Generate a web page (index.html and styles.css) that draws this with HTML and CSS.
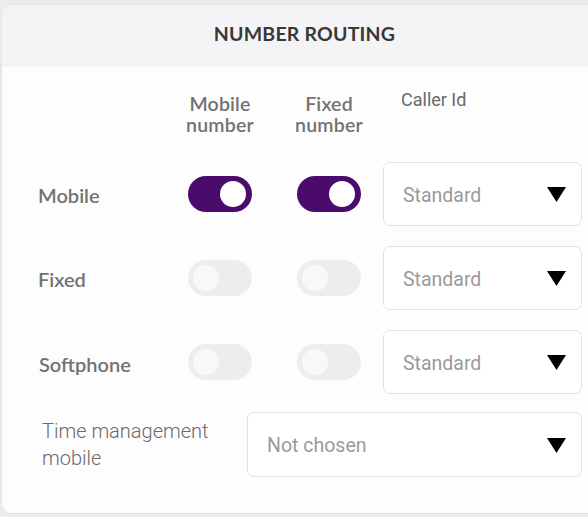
FILE: index.html
```html
<!DOCTYPE html>
<html>
<head>
<meta charset="utf-8">
<link rel="stylesheet" href="styles.css">
</head>
<body>
<div class="viewport">
  <section class="card">
    <header class="card-head">NUMBER ROUTING</header>
    <div class="card-body">
      <div class="grid">
        <div class="col-head"></div>
        <div class="col-head toggle-head"><span class="two-line"><span>Mobile</span><span>number</span></span></div>
        <div class="col-head toggle-head"><span class="two-line"><span>Fixed</span><span>number</span></span></div>
        <div class="col-head caller">Caller Id</div>

        <div class="row-label">Mobile</div>
        <div class="cell"><span class="toggle on"><span class="knob"></span></span></div>
        <div class="cell"><span class="toggle on"><span class="knob"></span></span></div>
        <div class="select"><span>Standard</span><svg class="caret" width="19" height="15" viewBox="0 0 19 15"><path d="M0 0H19L9.5 15Z"/></svg></div>

        <div class="row-label">Fixed</div>
        <div class="cell"><span class="toggle"><span class="knob"></span></span></div>
        <div class="cell"><span class="toggle"><span class="knob"></span></span></div>
        <div class="select"><span>Standard</span><svg class="caret" width="19" height="15" viewBox="0 0 19 15"><path d="M0 0H19L9.5 15Z"/></svg></div>

        <div class="row-label soft">Softphone</div>
        <div class="cell"><span class="toggle"><span class="knob"></span></span></div>
        <div class="cell"><span class="toggle"><span class="knob"></span></span></div>
        <div class="select"><span>Standard</span><svg class="caret" width="19" height="15" viewBox="0 0 19 15"><path d="M0 0H19L9.5 15Z"/></svg></div>
      </div>
      <div class="time-row">
        <div class="time-label"><span>Time management</span><span>mobile</span></div>
        <div class="select wide"><span>Not chosen</span><svg class="caret" width="19" height="15" viewBox="0 0 19 15"><path d="M0 0H19L9.5 15Z"/></svg></div>
      </div>
    </div>
  </section>
</div>
</body>
</html>
```

FILE: styles.css
```css
html, body {
  margin: 0;
  padding: 0;
  overflow: hidden;
  background: #ececec;
}

.viewport {
  width: 588px;
  height: 517px;
  overflow: hidden;
  padding: 4px 0 0 1px;
  box-sizing: border-box;
}

.card {
  width: 605px;
  background: #fdfdfd;
  border: 1px solid #e2e2e2;
  border-radius: 10px;
  overflow: hidden;
  font-family: Lato, "Open Sans", sans-serif;
}

.card-head {
  height: 56px;
  padding-bottom: 6px;
  background: #f4f4f6;
  display: flex;
  align-items: center;
  justify-content: center;
  font-family: Lato, sans-serif;
  font-weight: 700;
  font-size: 19.5px;
  color: #383838;
  letter-spacing: 0.2px;
}

.card-body {
  padding: 26px 0 36px 36px;
}

.grid {
  display: grid;
  grid-template-columns: 150px 109px 86px 199px;
  grid-auto-rows: 64px;
  grid-template-rows: 49px;
  row-gap: 20px;
  align-items: center;
}

.col-head {
  align-self: start;
  font-size: 19.5px;
  color: #727272;
  font-weight: 600;
}

.toggle-head {
  width: 64px;
  display: flex;
  justify-content: center;
  white-space: nowrap;
}

.two-line {
  display: flex;
  flex-direction: column;
  align-items: center;
  letter-spacing: 0.2px;
}

.two-line span {
  line-height: 21px;
  height: 21px;
}

.caller {
  font-family: Roboto, sans-serif;
  font-weight: 400;
  font-size: 18px;
  line-height: 21px;
  color: #6a6a6a;
  margin-top: -4px;
  padding-left: 18px;
}

.row-label {
  font-size: 20px;
  font-weight: 600;
  color: #727272;
  padding-top: 2px;
}

.row-label.soft {
  padding-left: 1px;
  padding-top: 4px;
}

.cell {
  display: flex;
  align-items: center;
}

.toggle {
  position: relative;
  display: block;
  width: 64px;
  height: 36px;
  border-radius: 18px;
  background: #ededed;
}

.toggle .knob {
  position: absolute;
  top: 5px;
  left: 5px;
  width: 26px;
  height: 26px;
  border-radius: 50%;
  background: #f8f8f8;
}

.toggle.on {
  background: #4b0b6d;
}

.toggle.on .knob {
  left: auto;
  right: 6px;
  background: #ffffff;
}

.select {
  box-sizing: border-box;
  height: 64px;
  border: 1.5px solid #e1e1e1;
  border-radius: 7px;
  background: #fff;
  display: flex;
  align-items: center;
  justify-content: space-between;
  padding: 0 15px 0 19px;
  font-family: Roboto, sans-serif;
  font-size: 19.5px;
  color: #9a9a9a;
}

.select span {
  padding-top: 3px;
}

.caret {
  display: block;
  fill: #000;
  margin-top: 1px;
}

.time-row {
  display: flex;
  align-items: center;
  margin-top: 18px;
}

.time-label {
  width: 209px;
  padding-left: 4px;
  box-sizing: border-box;
  display: flex;
  flex-direction: column;
  font-family: Roboto, sans-serif;
  font-weight: 300;
  font-size: 20px;
  line-height: 27px;
  color: #6a6a6a;
}

.select.wide {
  width: 335px;
  height: 65px;
}

.select.wide span {
  padding-top: 1px;
}
```
